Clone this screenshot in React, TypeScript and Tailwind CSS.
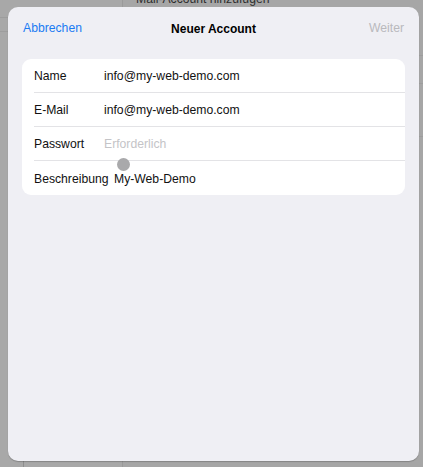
import React from 'react';

const rows = [
  { label: 'Name', value: 'info@my-web-demo.com', placeholder: false },
  { label: 'E-Mail', value: 'info@my-web-demo.com', placeholder: false },
  { label: 'Passwort', value: 'Erforderlich', placeholder: true },
  { label: 'Beschreibung', value: 'My-Web-Demo', placeholder: false },
];

export default function App() {
  return (
    <div
      className="relative w-[423px] h-[467px] overflow-hidden bg-[#a6a6a6]"
      style={{ fontFamily: '"Liberation Sans", Arial, sans-serif' }}
    >
      {/* dimmed screen behind the sheet */}
      <div className="flex h-full">
        <div className="w-[123px] h-full border-r border-[#9a9a9a] bg-[#a8a8a8] flex flex-col">
          <div className="h-[18px] border-b border-[#9d9d9d]" />
          <div className="h-[14px] border-b border-[#9d9d9d]" />
          <div className="flex-1" />
          <div className="h-[6px] ml-[23px] border-l border-[#8e8e8e]" />
        </div>
        <div className="flex-1 flex flex-col">
          <div className="h-[19px] pl-[13px] -mt-[10px] text-[12.2px] text-[#2e2e2e] leading-[18px] font-medium">
            Mail-Account hinzufügen
          </div>
          <div className="h-[47px] border-b border-[#9d9d9d]" />
          <div className="h-[28px] border-b border-[#9d9d9d]" />
          <div className="h-[53px] border-b border-[#9d9d9d]" />
        </div>
      </div>

      {/* sheet */}
      <div className="absolute left-[8px] top-[7px] w-[411px] h-[454px] rounded-[10px] bg-[#efeff4] shadow-[0_1px_1px_rgba(0,0,0,0.2)] flex flex-col">
        <div className="h-[40px] px-[15px] flex items-center justify-between text-[12.2px] pt-[3px]">
          <span className="text-[#1a7bf3] w-[70px]">Abbrechen</span>
          <span className="font-bold text-[12px] text-black">Neuer Account</span>
          <span className="text-[#b9b9bd] w-[70px] text-right">Weiter</span>
        </div>
        <div className="mx-[14px] mt-[12px] rounded-[9px] bg-white">
          {rows.map((r, i) => (
            <div key={r.label} className="pl-[12px] relative">
              <div
                className={`h-[34px] pt-[2px] flex items-center text-[12.2px] ${
                  i < rows.length - 1 ? 'border-b border-[#e3e3e6]' : ''
                }`}
              >
                <span className="w-[70px] shrink-0 text-[#111]">{r.label}</span>
                <span
                  className={`${r.placeholder ? 'text-[#c4c4c7]' : 'text-[#111]'} ${
                    i === 3 ? 'pl-[10px]' : ''
                  }`}
                >
                  {r.value}
                </span>
              </div>
              {i === 3 && (
                <div className="absolute left-[95px] -top-[3px] w-[13px] h-[13px] rounded-full bg-[#a9a9ab]" />
              )}
            </div>
          ))}
        </div>
      </div>
    </div>
  );
}
